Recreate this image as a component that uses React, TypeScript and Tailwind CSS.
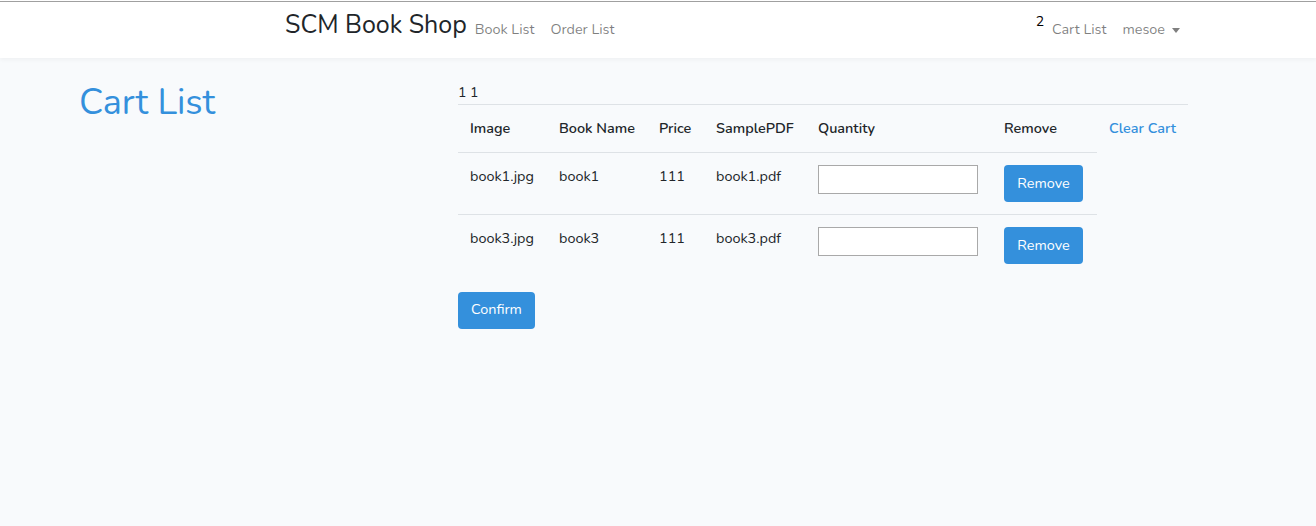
export default function App() {
  const rows = [
    { img: "book1.jpg", name: "book1", price: "111", pdf: "book1.pdf" },
    { img: "book3.jpg", name: "book3", price: "111", pdf: "book3.pdf" },
  ];
  return (
    <div
      className="min-h-[526px] bg-[#f8fafc] text-[#212529] text-[14.4px]"
      style={{ fontFamily: "Nunito, Lato, 'Noto Sans', sans-serif" }}
    >
      {/* Navbar */}
      <nav className="h-[57px] border-t border-[#a0a0a0] bg-white shadow-[0_2px_4px_rgba(0,0,0,0.04)] mt-px">
        <div className="flex h-full items-center pl-[285px] pr-[136px]">
          <span className="text-[25px] leading-none text-[#212529] mb-[9px]">SCM Book Shop</span>
          <a className="ml-2 text-black/50">Book List</a>
          <a className="ml-4 text-black/50">Order List</a>
          <div className="ml-auto flex items-center">
            <span className="text-[14px] text-black -mt-[16px]">2</span>
            <a className="ml-2 text-black/50">Cart List</a>
            <a className="ml-4 flex items-center text-black/50">
              mesoe
              <span className="ml-[7px] mt-[2px] h-0 w-0 border-x-[4px] border-t-[5px] border-x-transparent border-t-black/50" />
            </a>
          </div>
        </div>
      </nav>

      {/* Content */}
      <div className="flex pt-[23px]">
        <div className="w-[458px] pl-[79px]">
          <h1 className="text-[36px] leading-[1.2] text-[#3490dc]">Cart List</h1>
        </div>
        <div className="w-[730px]">
          <div className="h-[23px] pt-[1px] text-[14px] text-[#212529]">1 1</div>
          <table className="w-[730px] table-fixed border-collapse text-left">
            <colgroup>
              <col className="w-[89px]" />
              <col className="w-[100px]" />
              <col className="w-[57px]" />
              <col className="w-[102px]" />
              <col className="w-[186px]" />
              <col className="w-[105px]" />
              <col className="w-[91px]" />
            </colgroup>
            <thead>
              <tr className="h-[48px] border-t border-[#dee2e6] whitespace-nowrap">
                <th className="px-3 font-semibold">Image</th>
                <th className="px-3 font-semibold">Book Name</th>
                <th className="px-3 font-semibold">Price</th>
                <th className="px-3 font-semibold">SamplePDF</th>
                <th className="px-3 font-semibold">Quantity</th>
                <th className="px-3 font-semibold">Remove</th>
                <th className="px-3 font-semibold text-[#3490dc]">Clear Cart</th>
              </tr>
            </thead>
            <tbody>
              {rows.map((r) => (
                <tr key={r.img} className="h-[62px] align-top">
                  <td className="border-t border-[#dee2e6] px-3 pt-[13px]">{r.img}</td>
                  <td className="border-t border-[#dee2e6] px-3 pt-[13px]">{r.name}</td>
                  <td className="border-t border-[#dee2e6] px-3 pt-[13px]">{r.price}</td>
                  <td className="border-t border-[#dee2e6] px-3 pt-[13px]">{r.pdf}</td>
                  <td className="border-t border-[#dee2e6] px-3 pt-[12px]">
                    <input className="block h-[29px] w-[160px] border border-[#a9a9a9] bg-white" />
                  </td>
                  <td className="border-t border-[#dee2e6] px-3 pt-[12px]">
                    <button className="h-[37px] w-[79px] rounded-[4px] bg-[#3490dc] text-white">Remove</button>
                  </td>
                  <td />
                </tr>
              ))}
            </tbody>
          </table>
          <button className="mt-[15px] h-[37px] w-[77px] rounded-[4px] bg-[#3490dc] text-white">Confirm</button>
        </div>
      </div>
    </div>
  );
}
